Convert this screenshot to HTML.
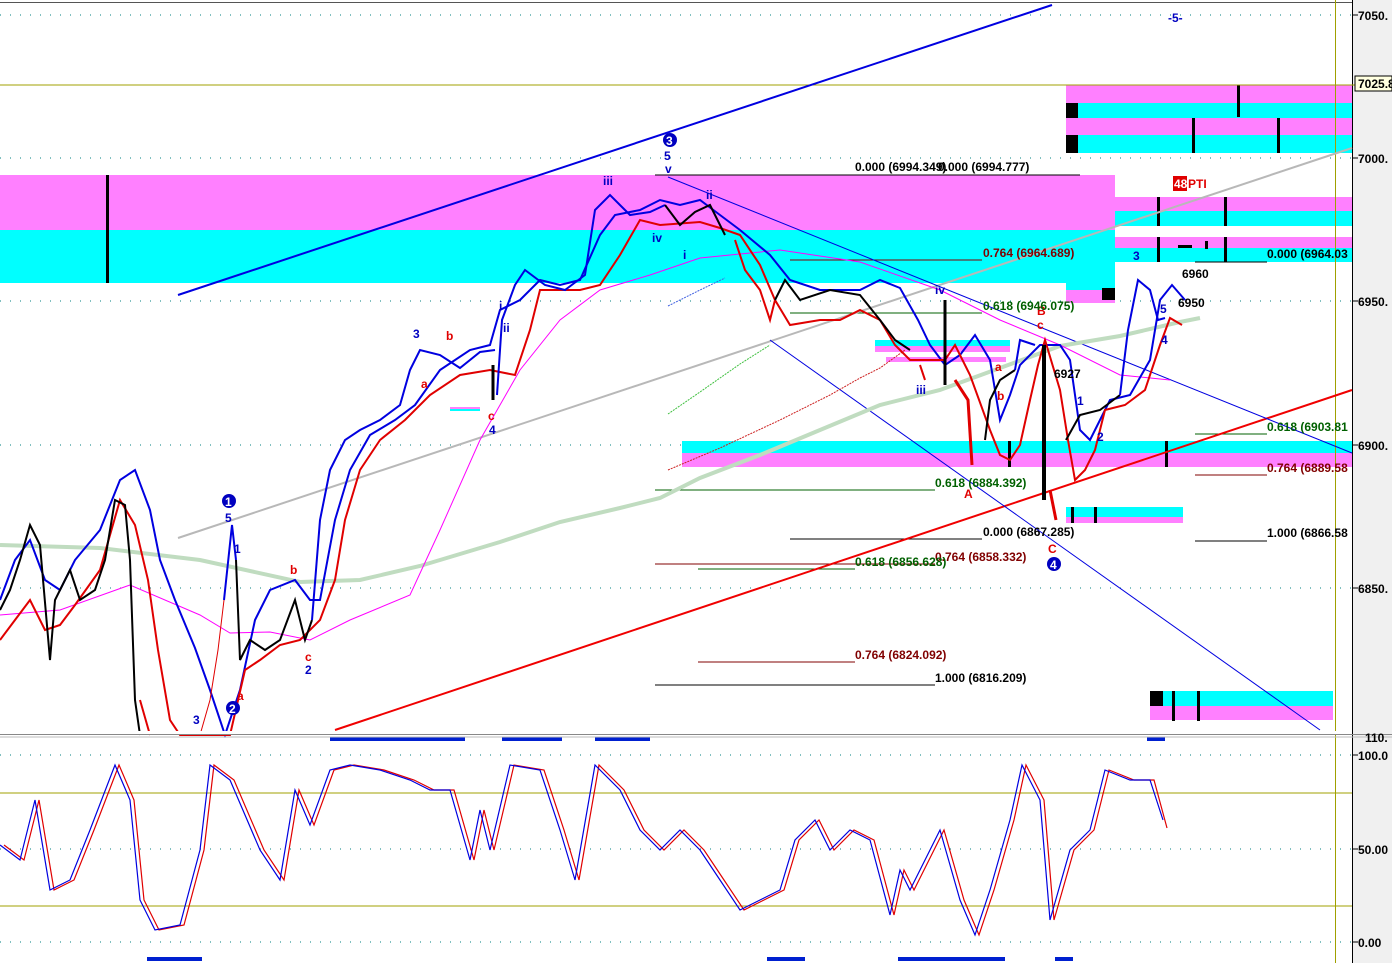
<!DOCTYPE html>
<html><head><meta charset="utf-8"><style>
html,body{margin:0;padding:0;background:#fff}
svg{display:block}
text{font-family:"Liberation Sans",Arial,sans-serif;font-size:12px;font-weight:bold}
.ax{font-size:12px;font-weight:bold;fill:#000}
</style></head><body>
<svg width="1392" height="963" viewBox="0 0 1392 963" xmlns="http://www.w3.org/2000/svg">
<rect width="1392" height="963" fill="#fff"/>
<!-- right axis -->
<rect x="1353" y="0" width="39" height="963" fill="#f0f0f0"/>
<line x1="1352.5" y1="0" x2="1352.5" y2="963" stroke="#000"/>
<line x1="0" y1="2.5" x2="1352" y2="2.5" stroke="#555"/>
<!-- grid dotted -->
<g stroke="#008080" stroke-dasharray="1,9" stroke-width="1">
<line x1="0" y1="15" x2="1352" y2="15"/><line x1="0" y1="158" x2="1352" y2="158"/>
<line x1="0" y1="301" x2="1352" y2="301"/><line x1="0" y1="445" x2="1352" y2="445"/>
<line x1="0" y1="588" x2="1352" y2="588"/><line x1="0" y1="755" x2="1352" y2="755"/>
<line x1="0" y1="849" x2="1352" y2="849"/><line x1="0" y1="942" x2="1352" y2="942"/>
</g>
<!-- bands -->
<rect x="0" y="175" width="1115" height="55" fill="#ff80ff"/>
<rect x="0" y="230" width="1115" height="53" fill="#00ffff"/>
<rect x="1066" y="85" width="286" height="18" fill="#ff80ff"/>
<rect x="1066" y="103" width="286" height="15" fill="#00ffff"/>
<rect x="1066" y="118" width="286" height="17" fill="#ff80ff"/>
<rect x="1066" y="135" width="286" height="18" fill="#00ffff"/>
<rect x="1115" y="197" width="237" height="14" fill="#ff80ff"/>
<rect x="1115" y="211" width="237" height="15" fill="#00ffff"/>
<rect x="1115" y="237" width="237" height="11" fill="#ff80ff"/>
<rect x="1115" y="248" width="237" height="14" fill="#00ffff"/>
<rect x="1066" y="277" width="49" height="13" fill="#00ffff"/>
<rect x="1066" y="290" width="49" height="13" fill="#ff80ff"/>
<rect x="682" y="441" width="670" height="12" fill="#00ffff"/>
<rect x="682" y="453" width="670" height="14" fill="#ff80ff"/>
<rect x="875" y="340" width="135" height="6" fill="#00ffff"/>
<rect x="875" y="346" width="135" height="6" fill="#ff80ff"/>
<rect x="886" y="357" width="120" height="5" fill="#ff80ff"/>
<rect x="1066" y="507" width="117" height="10" fill="#00ffff"/>
<rect x="1066" y="517" width="117" height="6" fill="#ff80ff"/>
<rect x="1150" y="691" width="183" height="15" fill="#00ffff"/>
<rect x="1150" y="706" width="183" height="14" fill="#ff80ff"/>
<rect x="450" y="407" width="30" height="2" fill="#ff80ff"/><rect x="450" y="409" width="30" height="2" fill="#00ffff"/>
<!-- black markers -->
<g fill="#000">
<rect x="1066" y="103" width="12" height="15"/><rect x="1066" y="135" width="12" height="18"/>
<rect x="1102" y="288" width="13" height="12"/><rect x="1150" y="691" width="13" height="15"/>
<rect x="106" y="175" width="3" height="108"/><rect x="1237" y="85" width="3" height="32"/>
<rect x="1192" y="118" width="3" height="35"/><rect x="1277" y="118" width="3" height="35"/>
<rect x="1157" y="197" width="3" height="29"/><rect x="1224" y="197" width="3" height="29"/>
<rect x="1157" y="237" width="3" height="25"/><rect x="1224" y="237" width="3" height="25"/>
<rect x="1178" y="245" width="14" height="3"/><rect x="1205" y="241" width="3" height="8"/>
<rect x="1008" y="441" width="3" height="26"/><rect x="1165" y="441" width="3" height="26"/>
<rect x="1071" y="507" width="3" height="16"/><rect x="1094" y="507" width="3" height="16"/>
<rect x="1172" y="691" width="3" height="30"/><rect x="1197" y="691" width="3" height="30"/>
</g>
<!-- olive lines -->
<line x1="0" y1="85" x2="1392" y2="85" stroke="#a0a000"/>
<line x1="1335.5" y1="0" x2="1335.5" y2="963" stroke="#a0a000"/>
<line x1="0" y1="793" x2="1352" y2="793" stroke="#a0a000"/>
<line x1="0" y1="906" x2="1352" y2="906" stroke="#a0a000"/>
<!-- fib lines -->
<g stroke-width="1">
<line x1="655" y1="175" x2="1080" y2="175" stroke="#000"/>
<line x1="790" y1="260" x2="982" y2="260" stroke="#800000"/>
<line x1="790" y1="313" x2="982" y2="313" stroke="#006000"/>
<line x1="655" y1="490" x2="935" y2="490" stroke="#006000"/>
<line x1="790" y1="539" x2="982" y2="539" stroke="#000"/>
<line x1="655" y1="564" x2="935" y2="564" stroke="#800000"/>
<line x1="698" y1="569" x2="855" y2="569" stroke="#006000"/>
<line x1="698" y1="662" x2="855" y2="662" stroke="#800000"/>
<line x1="655" y1="685" x2="935" y2="685" stroke="#000"/>
<line x1="1195" y1="262" x2="1267" y2="262" stroke="#000"/>
<line x1="1195" y1="434" x2="1267" y2="434" stroke="#006000"/>
<line x1="1195" y1="475" x2="1267" y2="475" stroke="#800000"/>
<line x1="1195" y1="541" x2="1267" y2="541" stroke="#000"/>
</g>
<!-- trend lines -->
<line x1="178" y1="295" x2="1052" y2="5" stroke="#0000e0" stroke-width="2"/>
<line x1="335" y1="730" x2="1352" y2="390" stroke="#f00000" stroke-width="2"/>
<line x1="178" y1="538" x2="1352" y2="148" stroke="#b8b8b8" stroke-width="2"/>
<line x1="668" y1="177" x2="1352" y2="453" stroke="#0000e0" stroke-width="1"/>
<line x1="770" y1="340" x2="1320" y2="730" stroke="#0000e0" stroke-width="1"/>
<!-- MAs -->
<polyline fill="none" stroke="#c0dcc0" stroke-width="4" points="0,545 100,548 200,560 300,582 360,580 420,566 500,542 560,522 620,508 660,498 700,478 760,455 820,430 880,405 940,390 1000,368 1060,346 1120,336 1180,322 1200,318"/>
<polyline fill="none" stroke="#ff00ff" stroke-width="1" points="0,615 60,610 130,585 200,615 230,633 270,632 310,640 350,620 410,595 440,530 480,440 520,370 560,320 600,290 650,275 700,258 780,250 860,262 940,290 1000,320 1060,345 1120,375 1170,380"/>
<polyline fill="none" stroke="#cc2020" stroke-width="1" stroke-dasharray="2,1" points="668,470 720,448 780,420 830,395 860,378 880,368 905,350"/>
<polyline fill="none" stroke="#40c040" stroke-width="1" stroke-dasharray="2,1" points="668,414 700,392 740,364 770,345"/>
<polyline fill="none" stroke="#4060e0" stroke-width="1" stroke-dasharray="2,1" points="668,306 700,290 725,278"/>
<!-- blue band curve -->
<polyline fill="none" stroke="#0000e0" stroke-width="2" points="0,600 15,560 30,540 45,580 60,590 75,560 100,530 120,480 135,470 150,510 160,560 175,600 195,648 210,690 225,735 240,690 255,620 270,590 295,580 310,600 320,600 335,520 350,470 370,435 395,420 415,405 440,370 470,350 490,345 500,310 520,300 540,280 560,285 580,280 600,235 615,215 640,210 660,200 680,205 700,200 720,215 740,230 770,255 790,280 820,290 860,290 880,280 900,288 918,320 930,345 945,365 960,355 975,335 990,360 1000,420 1010,395 1020,365 1040,345 1060,345 1070,360 1080,430 1090,440 1110,400 1130,395 1150,360 1160,300 1172,285 1185,300"/>
<polyline fill="none" stroke="#e00000" stroke-width="2" points="0,640 15,620 30,600 45,630 60,625 75,605 100,570 120,500 135,525 148,580 158,650 170,720 180,735 230,735 245,670 260,660 280,645 300,640 320,620 335,580 345,520 360,470 380,440 405,420 430,395 460,375 490,370 515,375 530,330 540,290 560,290 580,290 600,285 620,255 640,220 660,225 700,222 720,228 740,235 760,265 775,300 790,325 820,320 840,320 860,310 880,320 895,345 910,360 930,360 945,360 955,345 970,375 990,430 1000,455 1010,460 1020,445 1030,400 1038,365 1045,340 1060,390 1068,440 1075,480 1085,470 1095,450 1105,410 1125,405 1145,390 1160,345 1170,318 1182,325"/>
<!-- price path -->
<polyline fill="none" stroke="#000" stroke-width="2" points="0,610 10,590 20,560 30,525 40,545 50,660 55,600 70,570 80,600 95,590 105,560 115,500 125,505 130,560 135,700 140,735"/>
<polyline fill="none" stroke="#e00000" stroke-width="2" points="140,700 150,735"/>
<polyline fill="none" stroke="#e00000" stroke-width="1" points="200,735 210,700 218,650 224,600"/>
<polyline fill="none" stroke="#0000e0" stroke-width="2" points="224,600 232,525 236,560"/>
<polyline fill="none" stroke="#000" stroke-width="2" points="236,560 240,660 250,640 265,650 280,640 295,600 305,640 312,620"/>
<polyline fill="none" stroke="#0000e0" stroke-width="2" points="312,620 320,520 330,470 345,440 360,430 380,420 400,405 410,370 420,350 440,355 460,368 480,352 495,350"/>
<polyline fill="none" stroke="#000" stroke-width="3" points="493,365 493,400"/>
<polyline fill="none" stroke="#0000e0" stroke-width="2" points="497,395 502,320 515,285 525,270 545,285 565,290 585,275 595,210 610,195 630,215 650,212 665,205"/>
<polyline fill="none" stroke="#000" stroke-width="2" points="665,205 680,225 695,212 710,205 725,235"/>
<polyline fill="none" stroke="#e00000" stroke-width="2" points="735,240 745,270 760,290 770,320 775,300"/>
<polyline fill="none" stroke="#000" stroke-width="2" points="775,300 785,280 800,300 830,290 860,295 880,320 895,340 910,350"/>
<polyline fill="none" stroke="#e00000" stroke-width="2" points="920,365 925,380"/>
<polyline fill="none" stroke="#000" stroke-width="3" points="945,300 945,385"/>
<polyline fill="none" stroke="#e00000" stroke-width="3" points="955,380 968,400 972,465"/>
<polyline fill="none" stroke="#000" stroke-width="2" points="985,440 990,400 1000,380 1015,370"/>
<polyline fill="none" stroke="#0000e0" stroke-width="2" points="1015,370 1020,340 1035,345"/>
<polyline fill="none" stroke="#000" stroke-width="4" points="1044,345 1044,500"/>
<polyline fill="none" stroke="#e00000" stroke-width="3" points="1050,490 1056,520"/>
<polyline fill="none" stroke="#000" stroke-width="2" points="1066,440 1080,415 1100,410 1120,395"/>
<polyline fill="none" stroke="#0000e0" stroke-width="2" points="1120,395 1128,330 1138,280 1150,290 1158,320 1165,318"/>
<!-- bottom blue bars -->
<g fill="#0020d0">
<rect x="330" y="737" width="135" height="4"/><rect x="502" y="737" width="60" height="4"/>
<rect x="595" y="737" width="55" height="4"/><rect x="1147" y="737" width="18" height="4"/>
<rect x="147" y="957" width="55" height="4"/><rect x="767" y="957" width="38" height="4"/>
<rect x="898" y="957" width="107" height="4"/><rect x="1055" y="957" width="18" height="4"/>
</g>
<!-- separator -->
<rect x="0" y="731" width="1352" height="3" fill="#fff"/>
<line x1="0" y1="734.5" x2="1392" y2="734.5" stroke="#888"/>
<line x1="0" y1="737" x2="1392" y2="737" stroke="#bbb"/>
<!-- stochastic -->
<polyline fill="none" stroke="#e00000" stroke-width="1.2" points="4,845 24,860 39,800 54,890 74,880 94,830 119,765 134,800 144,900 159,930 184,925 204,850 214,765 234,780 264,850 284,880 299,790 314,825 334,770 354,765 384,770 414,780 434,790 454,790 474,860 484,810 494,850 514,765 544,770 564,830 579,880 599,765 624,790 644,830 664,850 684,830 704,850 724,880 744,910 764,900 784,890 799,840 819,820 834,850 854,830 874,840 894,915 904,870 914,890 944,830 964,900 979,935 994,890 1014,820 1026,765 1044,800 1054,920 1074,850 1094,830 1109,770 1134,780 1154,780 1167,828"/>
<polyline fill="none" stroke="#0000e0" stroke-width="1.2" points="0,845 20,860 35,800 50,890 70,880 90,830 115,765 130,800 140,900 155,930 180,925 200,850 210,765 230,780 260,850 280,880 295,790 310,825 330,770 350,765 380,770 410,780 430,790 450,790 470,860 480,810 490,850 510,765 540,770 560,830 575,880 595,765 620,790 640,830 660,850 680,830 700,850 720,880 740,910 760,900 780,890 795,840 815,820 830,850 850,830 870,840 890,915 900,870 910,890 940,830 960,900 975,935 990,890 1010,820 1022,765 1040,800 1050,920 1070,850 1090,830 1105,770 1130,780 1150,780 1163,820"/>
<!-- wave labels -->
<g font-size="12">
<text x="603" y="185" fill="#0000c0">iii</text><text x="706" y="199" fill="#0000c0">ii</text>
<text x="652" y="242" fill="#0000c0">iv</text><text x="683" y="259" fill="#0000c0">i</text>
<text x="664" y="160" fill="#0000c0">5</text><text x="665" y="173" fill="#0000c0">v</text>
<text x="935" y="294" fill="#0000c0">iv</text><text x="916" y="394" fill="#0000c0">iii</text>
<text x="413" y="338" fill="#0000c0">3</text><text x="446" y="340" fill="#e00000">b</text>
<text x="421" y="388" fill="#e00000">a</text><text x="488" y="420" fill="#e00000">c</text>
<text x="489" y="434" fill="#0000c0">4</text><text x="499" y="310" fill="#0000c0">i</text>
<text x="503" y="332" fill="#0000c0">ii</text>
<text x="225" y="522" fill="#0000c0">5</text><text x="234" y="553" fill="#0000c0">1</text>
<text x="290" y="574" fill="#e00000">b</text><text x="305" y="661" fill="#e00000">c</text>
<text x="305" y="674" fill="#0000c0">2</text><text x="237" y="700" fill="#e00000">a</text>
<text x="193" y="724" fill="#0000c0">3</text>
<text x="995" y="371" fill="#e00000">a</text><text x="997" y="400" fill="#e00000">b</text>
<text x="1037" y="315" fill="#e00000">B</text><text x="1037" y="329" fill="#e00000">c</text>
<text x="964" y="498" fill="#e00000">A</text><text x="1048" y="553" fill="#e00000">C</text>
<text x="1077" y="405" fill="#0000c0">1</text><text x="1097" y="441" fill="#0000c0">2</text>
<text x="1133" y="260" fill="#0000c0">3</text><text x="1160" y="313" fill="#0000c0">5</text>
<text x="1161" y="344" fill="#0000c0">4</text><text x="1168" y="22" fill="#0000c0" font-weight="normal">-5-</text>
</g>
<g>
<circle cx="670" cy="140" r="7" fill="#0000c0"/><text x="666" y="145" fill="#fff" font-size="11">3</text>
<circle cx="229" cy="501" r="7" fill="#0000c0"/><text x="225" y="506" fill="#fff" font-size="11">1</text>
<circle cx="233" cy="708" r="7" fill="#0000c0"/><text x="229" y="713" fill="#fff" font-size="11">2</text>
<circle cx="1054" cy="564" r="7" fill="#0000c0"/><text x="1050" y="569" fill="#fff" font-size="11">4</text>
</g>
<!-- fib texts -->
<g font-size="12">
<text x="855" y="171" fill="#000">0.000 (6994.349)</text><text x="938" y="171" fill="#000">0.000 (6994.777)</text>
<text x="983" y="257" fill="#800000">0.764 (6964.689)</text>
<text x="983" y="310" fill="#006000">0.618 (6946.075)</text>
<text x="935" y="487" fill="#006000">0.618 (6884.392)</text>
<text x="983" y="536" fill="#000">0.000 (6867.285)</text>
<text x="935" y="561" fill="#800000">0.764 (6858.332)</text>
<text x="855" y="566" fill="#006000">0.618 (6856.628)</text>
<text x="855" y="659" fill="#800000">0.764 (6824.092)</text>
<text x="935" y="682" fill="#000">1.000 (6816.209)</text>
<text x="1267" y="258" fill="#000">0.000 (6964.03</text>
<text x="1267" y="431" fill="#006000">0.618 (6903.81</text>
<text x="1267" y="472" fill="#800000">0.764 (6889.58</text>
<text x="1267" y="537" fill="#000">1.000 (6866.58</text>
<text x="1182" y="278" fill="#000">6960</text><text x="1178" y="307" fill="#000">6950</text>
<text x="1054" y="378" fill="#000">6927</text>
</g>
<rect x="1173" y="176" width="14" height="15" fill="#e00000"/>
<text x="1174" y="188" fill="#fff" font-size="12">48</text><text x="1188" y="188" fill="#e00000" font-size="12">PTI</text>
<!-- axis labels -->
<rect x="1336" y="0" width="16" height="730" fill="#fff" opacity="0"/>
<g class="ax">
<line x1="1352" y1="15" x2="1358" y2="15" stroke="#000"/><text x="1358" y="20" class="ax">7050.</text>
<line x1="1352" y1="158" x2="1358" y2="158" stroke="#000"/><text x="1358" y="163" class="ax">7000.</text>
<line x1="1352" y1="301" x2="1358" y2="301" stroke="#000"/><text x="1358" y="306" class="ax">6950.</text>
<line x1="1352" y1="445" x2="1358" y2="445" stroke="#000"/><text x="1358" y="450" class="ax">6900.</text>
<line x1="1352" y1="588" x2="1358" y2="588" stroke="#000"/><text x="1358" y="593" class="ax">6850.</text>
<line x1="1352" y1="755" x2="1358" y2="755" stroke="#000"/><text x="1358" y="760" class="ax">100.0</text>
<line x1="1352" y1="849" x2="1358" y2="849" stroke="#000"/><text x="1358" y="854" class="ax">50.00</text>
<line x1="1352" y1="942" x2="1358" y2="942" stroke="#000"/><text x="1358" y="947" class="ax">0.00</text>
</g>
<rect x="1355" y="76" width="37" height="15" fill="#ffffe0" stroke="#000"/>
<text x="1358" y="88" class="ax">7025.8</text>
<text x="1365" y="742" class="ax" font-size="10">110.</text>
</svg>
</body></html>
